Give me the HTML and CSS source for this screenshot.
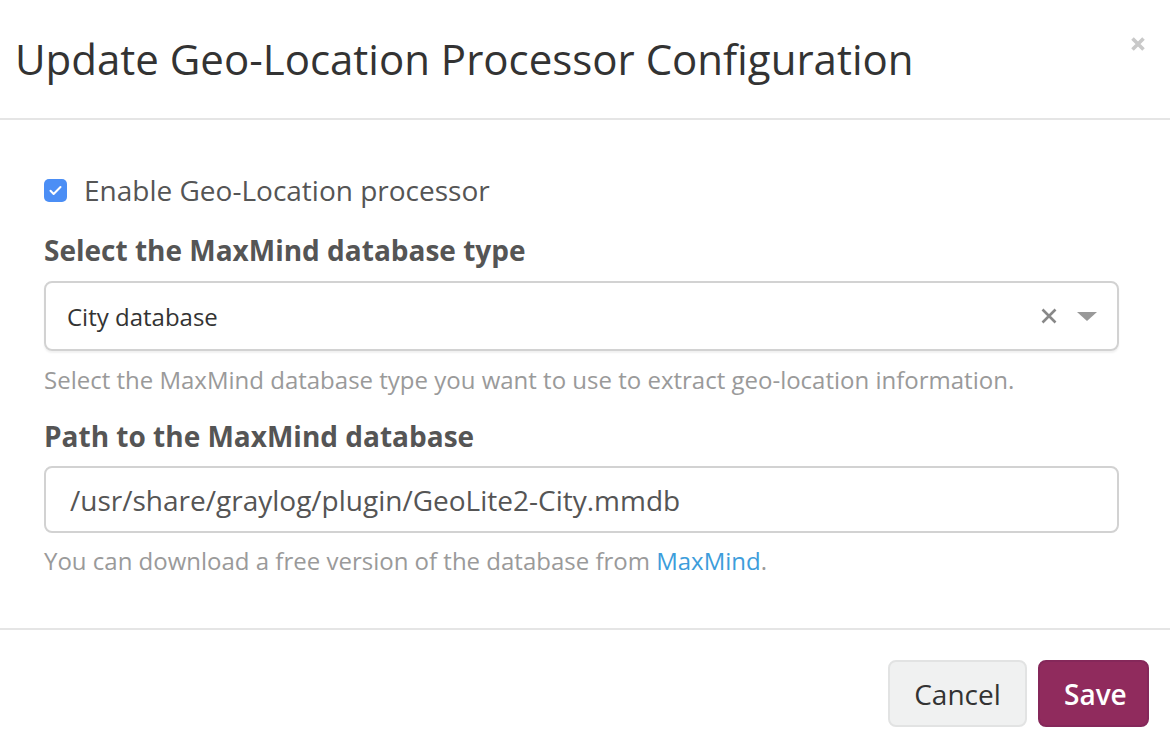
FILE: index.html
```html
<!DOCTYPE html>
<html>
<head>
<meta charset="utf-8">
<link rel="stylesheet" href="styles.css">
</head>
<body>
<div class="modal">
  <div class="modal-header">
    <h4 class="modal-title">Update Geo-Location Processor Configuration</h4>
    <span class="close">
      <svg viewBox="0 0 16 16" width="16" height="16"><path d="M2.5 2.5L13.5 13.5M13.5 2.5L2.5 13.5" stroke="#c9c9c9" stroke-width="3.6"/></svg>
    </span>
  </div>
  <div class="modal-body">
    <label class="check-row">
      <span class="checkbox">
        <svg viewBox="0 0 24 24" width="15" height="15"><path d="M4 12.5l5 5L20 6.5" fill="none" stroke="#fff" stroke-width="3.2" stroke-linecap="round" stroke-linejoin="round"/></svg>
      </span>
      <span class="check-label">Enable Geo-Location processor</span>
    </label>
    <div class="control-label first">Select the MaxMind database type</div>
    <div class="select">
      <span class="select-value">City database</span>
      <span class="select-clear">
        <svg viewBox="0 0 16 16" width="16" height="16"><path d="M1.5 1.5L14.5 14.5M14.5 1.5L1.5 14.5" stroke="#888" stroke-width="2.6"/></svg>
      </span>
      <span class="select-arrow"></span>
    </div>
    <div class="help">Select the MaxMind database type you want to use to extract geo-location information.</div>
    <div class="control-label second">Path to the MaxMind database</div>
    <div class="input">/usr/share/graylog/plugin/GeoLite2-City.mmdb</div>
    <div class="help help2">You can download a free version of the database from <a class="link">MaxMind</a>.</div>
  </div>
  <div class="modal-footer">
    <button class="btn btn-default">Cancel</button>
    <button class="btn btn-primary">Save</button>
  </div>
</div>
</body>
</html>
```

FILE: styles.css
```css
html, body {
  margin: 0;
  padding: 0;
  background: #fff;
}
body {
  font-family: "Open Sans", "Liberation Sans", sans-serif;
  color: #555;
}
.modal {
  width: 1170px;
  height: 754px;
  display: flex;
  flex-direction: column;
}
.modal-header {
  height: 118px;
  border-bottom: 2px solid #e5e5e5;
  display: flex;
  align-items: flex-start;
  justify-content: space-between;
  padding: 0 24px 0 15px;
  box-sizing: content-box;
  flex-shrink: 0;
}
.modal-title {
  margin: 0;
  font-weight: 400;
  font-size: 42px;
  line-height: 56px;
  color: #333;
  padding-top: 31px;
}
.close {
  display: flex;
  margin-top: 36px;
}
.modal-body {
  padding: 50px 51px 0 44px;
  height: 508px;
  box-sizing: border-box;
  flex-shrink: 0;
}
.check-row {
  display: flex;
  align-items: center;
  height: 40px;
}
.checkbox {
  width: 23px;
  height: 23px;
  border-radius: 5px;
  background: #4b8ef5;
  display: flex;
  align-items: center;
  justify-content: center;
  margin-right: 17px;
}
.check-label {
  font-size: 28px;
  line-height: 40px;
  color: #555;
}
.control-label {
  font-size: 28px;
  font-weight: 700;
  line-height: 40px;
  color: #555;
}
.control-label.first { margin-top: 20px; }
.control-label.second { margin-top: 19px; }
.select {
  margin-top: 11px;
  height: 70px;
  box-sizing: border-box;
  border: 2px solid #d2d2d2;
  border-radius: 8px;
  box-shadow: 0 2px 2px rgba(0,0,0,0.06);
  display: flex;
  align-items: center;
  padding: 0 20px 0 21px;
}
.select-value {
  flex: 1;
  font-size: 24px;
  color: #333;
}
.select-clear {
  display: flex;
  margin-right: 20px;
}
.select-arrow {
  width: 0;
  height: 0;
  border-left: 10px solid transparent;
  border-right: 10px solid transparent;
  border-top: 9px solid #999;
}
.help {
  margin-top: 12px;
  font-size: 24px;
  line-height: 34px;
  color: #9a9a9a;
}
.help2 { margin-top: 11px; }
.link { color: #3d9ddb; text-decoration: none; }
.input {
  margin-top: 10px;
  height: 67px;
  box-sizing: border-box;
  border: 2px solid #d2d2d2;
  border-radius: 8px;
  display: flex;
  align-items: center;
  padding: 0 24px;
  font-size: 28px;
  color: #555;
}
.modal-footer {
  flex: 1;
  border-top: 2px solid #e5e5e5;
  display: flex;
  justify-content: flex-end;
  align-items: flex-start;
  padding: 30px 21px 0 0;
  gap: 11px;
}
.btn {
  height: 67px;
  font-family: "Open Sans", "Liberation Sans", sans-serif;
  font-size: 28px;
  border-radius: 8px;
  padding: 0 24px;
  box-sizing: border-box;
}
.btn-default {
  width: 139px;
  background: #f0f1f1;
  border: 2px solid #e2e3e3;
  color: #333;
}
.btn-primary {
  width: 111px;
  background: #902b5d;
  border: 2px solid #85285a;
  color: #fff;
  font-weight: 600;
}
```
